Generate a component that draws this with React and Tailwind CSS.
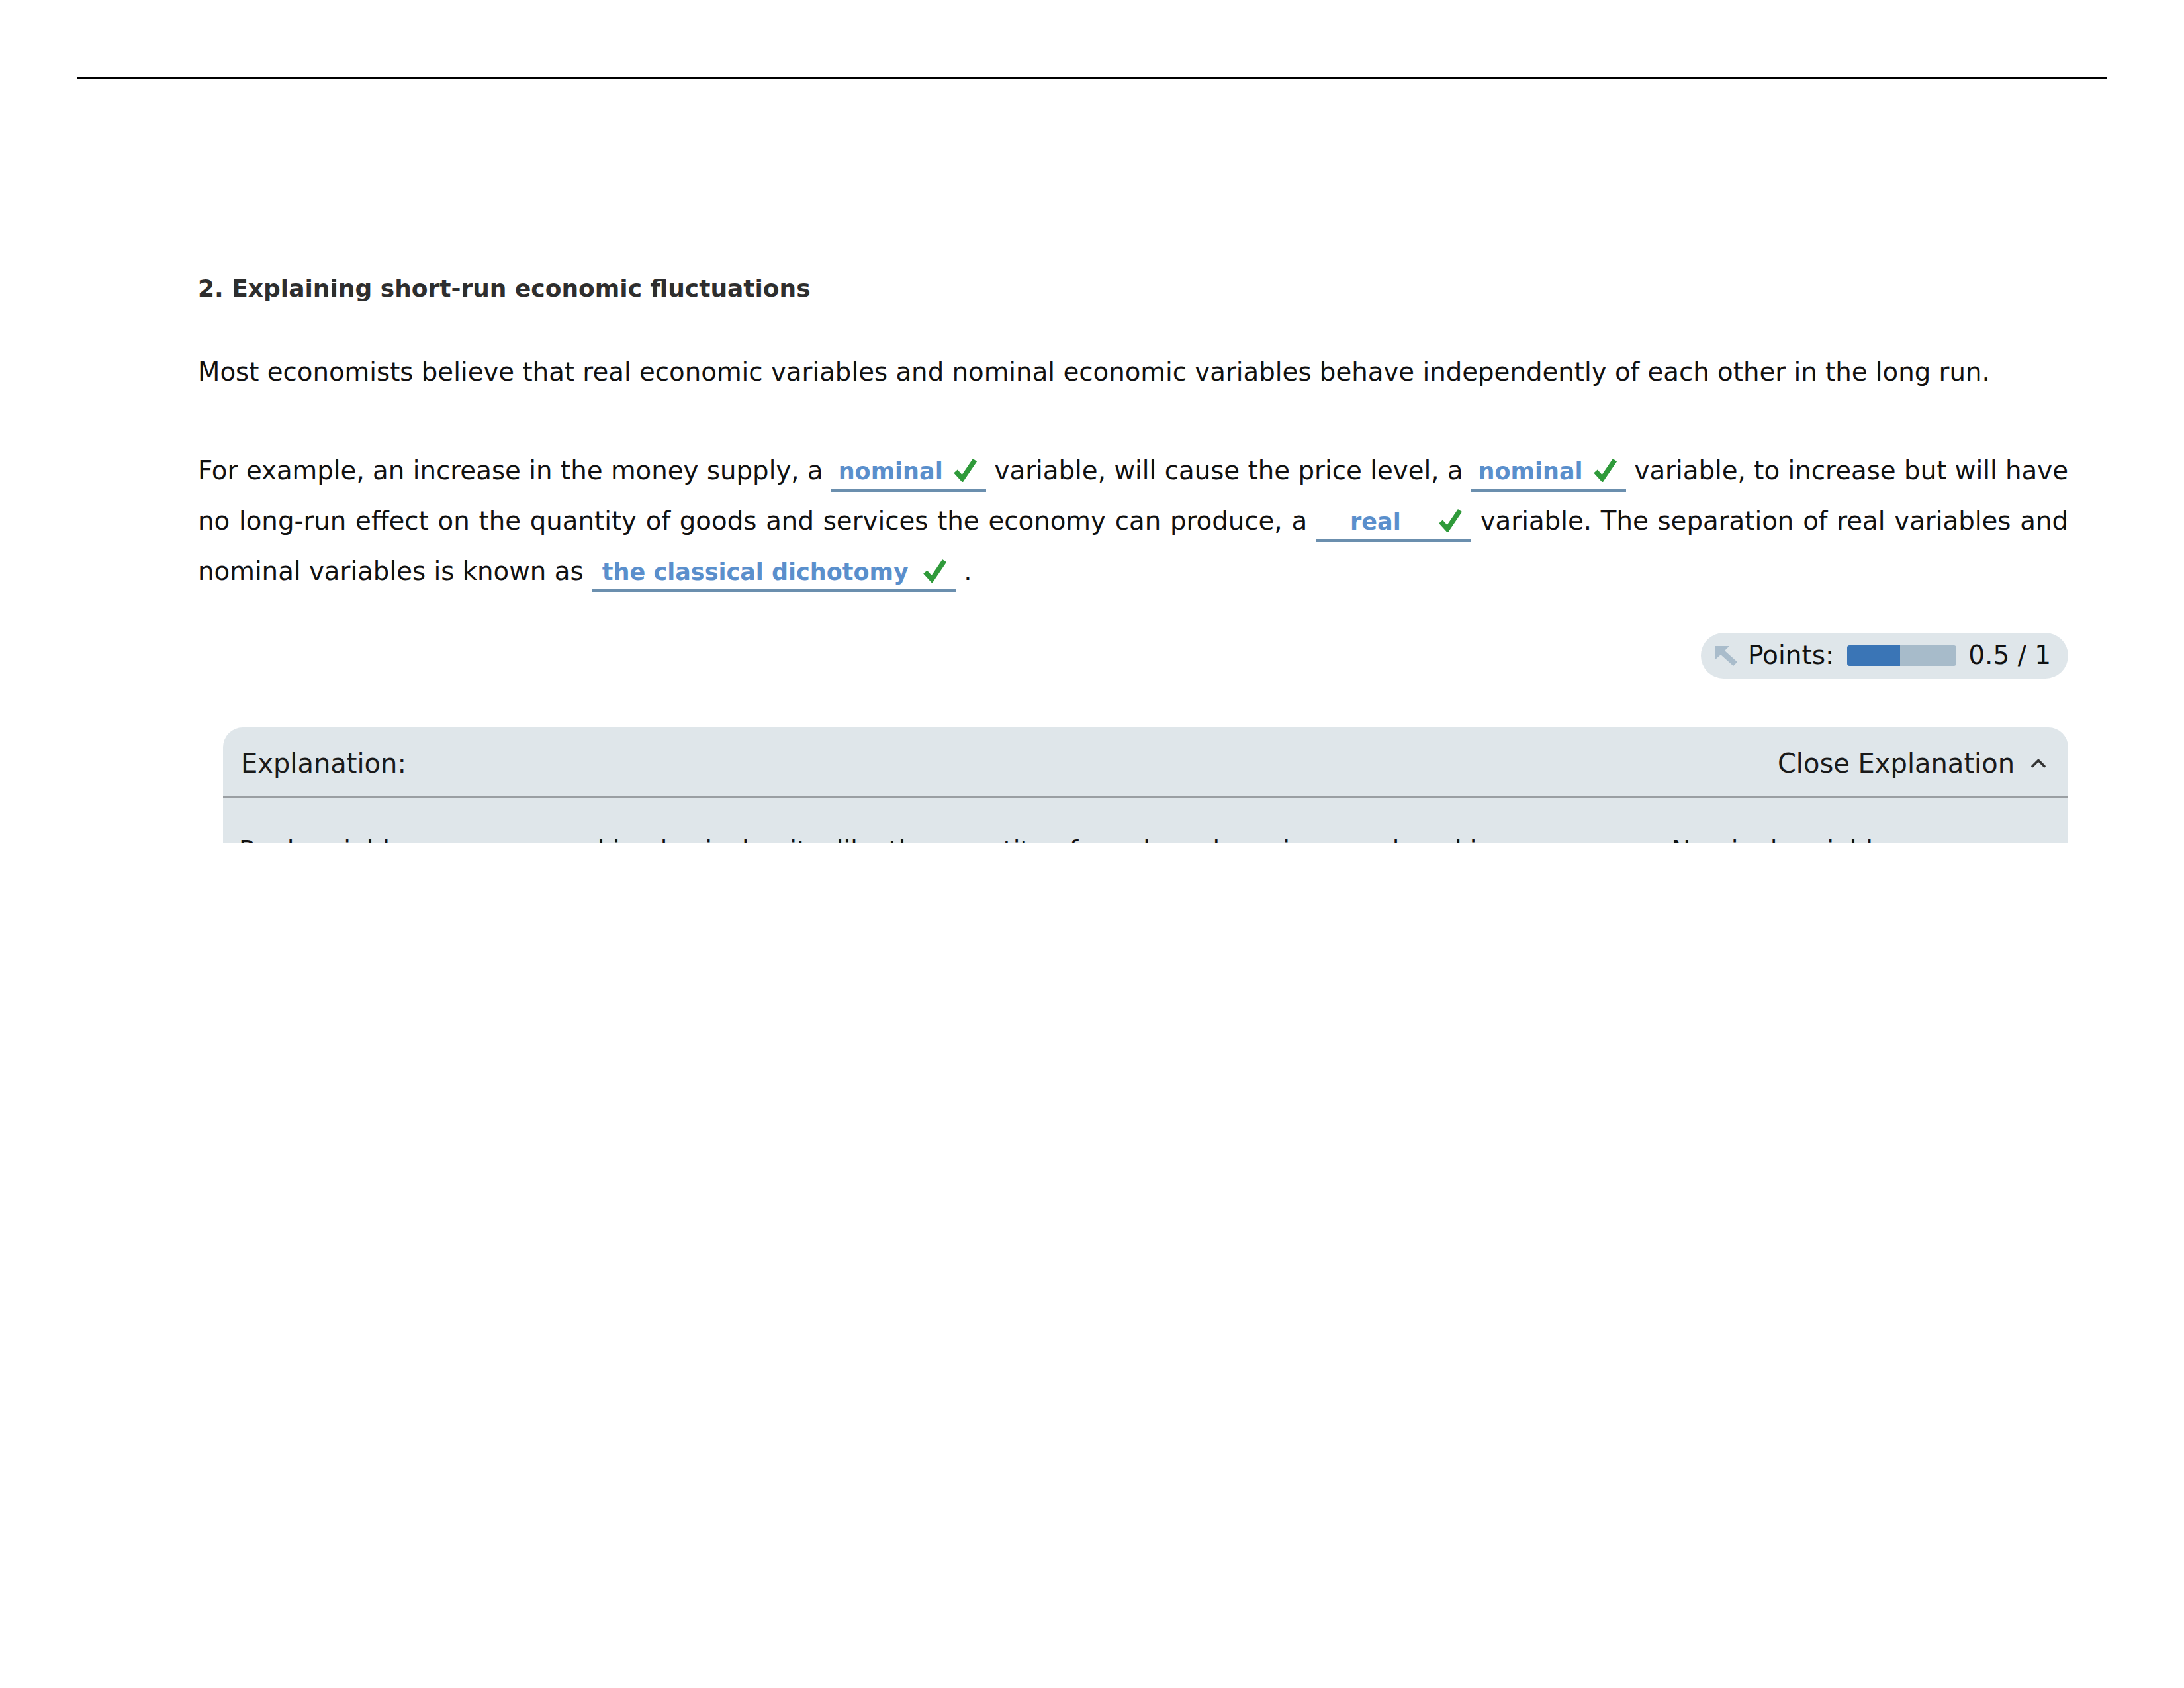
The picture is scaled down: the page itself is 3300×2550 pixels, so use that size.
import React from 'react';
import { ChevronUp } from 'lucide-react';

function Check() {
    return (
        <svg width="35" height="36" viewBox="0 0 35 36" className="shrink-0 self-end mb-[2px]">
            <path d="M3 20 L13 31 L32 3" fill="none" stroke="#2f9a3a" strokeWidth="7.5" />
        </svg>
    );
}

function Blank({ children, wide = false }) {
    return (
        <span className={`inline-flex items-end align-baseline border-b-[5px] border-[#6b8fae] pl-[8px] pr-[14px] pb-[8px] leading-none ${wide ? 'min-w-[550px]' : 'min-w-[234px]'}`}>
            <span className="flex-1 text-center font-bold text-[35px] text-[#5a8fcc]">{children}</span>
            <span className="ml-[14px] flex"><Check /></span>
        </span>
    );
}

export default function App() {
    return (
        <div className="w-[3300px] h-[2550px] bg-white font-['DejaVu_Sans',Verdana,sans-serif] text-[#111]">
            {/* top rule */}
            <div className="pt-[116px] px-[116px]">
                <div className="h-[3px] bg-black" />
            </div>

            <div className="ml-[299px] w-[2826px] text-[38.7px]">
                <h2 className="mt-[295px] font-bold text-[#2e2e2e] leading-[44px] text-[36px]">
                    2. Explaining short-run economic fluctuations
                </h2>

                <p className="mt-[66px] leading-[76px]">
                    Most economists believe that real economic variables and nominal economic variables behave independently of each other in the long run.
                </p>

                <p className="mt-[73px] leading-[76px] text-justify">
                    For example, an increase in the money supply, a <Blank>nominal</Blank> variable, will cause the price level, a <Blank>nominal</Blank> variable, to increase but will have no long-run effect on the quantity of goods and services the economy can produce, a <Blank>real</Blank> variable. The separation of real variables and nominal variables is known as <Blank wide>the classical dichotomy</Blank> .
                </p>

                {/* points */}
                <div className="mt-[55px] flex justify-end">
                    <div className="h-[69px] pl-[21px] pr-[26px] rounded-full bg-[#dfe6ea] flex items-center gap-[16px] text-[39px]">
                        <svg width="34" height="30" viewBox="0 0 34 30">
                            <polygon points="0,0 22,0 15,7 34,24 28,30 9,13 0,21" fill="#a9bccb" />
                        </svg>
                        <span>Points:</span>
                        <div className="w-[165px] h-[31px] rounded-[4px] bg-[#a7bbca] overflow-hidden flex ml-[4px]">
                            <div className="w-[80px] h-full bg-[#3a75b6]" />
                        </div>
                        <span className="ml-[2px]">0.5 / 1</span>
                    </div>
                </div>

                {/* explanation */}
                <div className="mt-[74px] ml-[38px] h-[174px] overflow-hidden rounded-t-[30px] bg-[#dfe6ea]">
                    <div className="h-[106px] px-[27px] pt-[4px] flex items-center justify-between border-b-[3px] border-[#9a9fa3] text-[#1a1a1a] text-[40px]">
                        <span>Explanation:</span>
                        <span className="flex items-center gap-[18px]">
                            Close Explanation
                            <ChevronUp size={36} strokeWidth={2.5} color="#333" />
                        </span>
                    </div>
                    <p className="px-[24px] pt-[42px] leading-[76px]">
                        Real variables are measured in physical units, like the quantity of goods and services produced in an economy. Nominal variables are measured in
                    </p>
                </div>
            </div>
        </div>
    );
}
